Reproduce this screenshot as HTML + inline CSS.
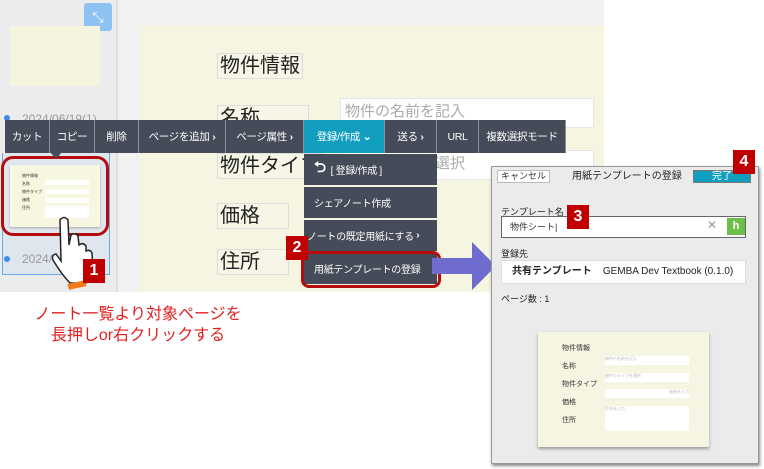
<!DOCTYPE html><html><head><meta charset="utf-8"><style>
*{margin:0;padding:0;box-sizing:border-box}
body{width:764px;height:469px;overflow:hidden;background:#fff;position:relative;font-family:"Liberation Sans","Noto Sans CJK JP",sans-serif}
.a{position:absolute;white-space:nowrap}
.tb{position:absolute;top:120px;height:33px;background:#454b58;color:#fff;font-size:10.5px;display:flex;align-items:center;justify-content:center;border-right:1px solid #8a8f98;white-space:nowrap;letter-spacing:-0.3px}
.dd{position:absolute;left:304px;width:133px;background:#454b58;color:#fff;font-size:10px;display:flex;align-items:center;padding-left:10px;white-space:nowrap;letter-spacing:-0.3px}
.lab{position:absolute;font-size:20px;color:#222;border:1px solid #ddd;padding:0 2px;line-height:24px;background:rgba(255,255,255,.15);white-space:nowrap}
.inp{position:absolute;background:#fff;border:1px solid #e5e5e5;color:#aaa;font-size:15px;padding-left:4px;line-height:26px;white-space:nowrap}
.badge{position:absolute;background:#c00000;color:#fff;font-weight:bold;font-size:16px;width:22px;height:24px;display:flex;align-items:center;justify-content:center}
</style></head><body>
<div class="a" style="left:0;top:0;width:116px;height:292px;background:#ececec"></div>
<div class="a" style="left:116px;top:0;width:2px;height:292px;background:#e0e0e0"></div>
<div class="a" style="left:84px;top:3px;width:28px;height:28px;background:#8ec2f3;border-radius:3px;color:#fff;font-size:14px;text-align:center;line-height:28px">⤡</div>
<div class="a" style="left:10px;top:26px;width:90px;height:60px;background:#f5f5df"></div>
<div class="a" style="left:4px;top:115px;width:6px;height:6px;border-radius:50%;background:#3a8ee6"></div>
<div class="a" style="left:22px;top:112px;font-size:12px;color:#999">2024/06/19(1)</div>
<div class="a" style="left:2px;top:153px;width:108px;height:122px;background:#dfe6ee;border:1px solid #6aa8f0;border-top:none"></div>
<div class="a" style="left:10px;top:165px;width:90px;height:62px;background:#f7f7e1;box-shadow:0 1px 2px #aaa"></div>
<div class="a" style="left:22px;top:172px;font-size:4px;color:#333;line-height:8px">物件情報<br>名称<br>物件タイプ<br>価格<br>住所</div>
<div class="a" style="left:45px;top:180px;width:44px;height:5px;background:#fff"></div>
<div class="a" style="left:45px;top:189px;width:44px;height:5px;background:#fff"></div>
<div class="a" style="left:45px;top:198px;width:44px;height:5px;background:#fff"></div>
<div class="a" style="left:45px;top:206px;width:44px;height:12px;background:#fff"></div>
<div class="a" style="left:1px;top:156px;width:108px;height:80px;border:3px solid #b50d0d;border-radius:12px"></div>
<div class="a" style="left:4px;top:256px;width:6px;height:6px;border-radius:50%;background:#3a8ee6"></div>
<div class="a" style="left:22px;top:252px;font-size:12px;color:#999">2024/0</div>
<svg class="a" style="left:48px;top:215px" width="50" height="75" viewBox="0 0 50 75"><path d="M12 5 Q16 0 20 5 L21 30 L23 20 Q27 17 30 21 L31 30 Q35 27 38 31 L38 36 Q42 34 44 38 L45 55 Q44 62 38 68 L22 68 Q14 60 5 45 Q3 40 8 39 L13 46 Z" fill="#fff" stroke="#222" stroke-width="1.5"/><rect x="20" y="67" width="18" height="6" fill="#f07b1c" transform="rotate(-12 29 70)"/></svg>
<div class="badge" style="left:83px;top:259px">1</div>
<div class="a" style="left:118px;top:0;width:486px;height:292px;background:#f2f2f2"></div>
<div class="a" style="left:139px;top:26px;width:465px;height:266px;background:#f6f5e2"></div>
<div class="lab" style="left:217px;top:53px">物件情報</div>
<div class="lab" style="left:217px;top:105px;width:92px">名称</div>
<div class="inp" style="left:340px;top:98px;width:254px;height:30px">物件の名前を記入</div>
<div class="lab" style="left:217px;top:153px">物件タイプ</div>
<div class="inp" style="left:340px;top:150px;width:254px;height:30px">　　　　　　選択</div>
<div class="lab" style="left:217px;top:203px;width:72px">価格</div>
<div class="lab" style="left:217px;top:249px;width:72px">住所</div>
<div class="tb" style="left:5px;width:45px">カット</div>
<div class="tb" style="left:50px;width:45px">コピー</div>
<div class="tb" style="left:95px;width:44px">削除</div>
<div class="tb" style="left:139px;width:87px">ページを追加&nbsp;<b>›</b></div>
<div class="tb" style="left:226px;width:78px">ページ属性&nbsp;<b>›</b></div>
<div class="tb" style="left:304px;width:81px;background:#129fbf">登録/作成&nbsp;<b>⌄</b></div>
<div class="tb" style="left:385px;width:52px">送る&nbsp;<b>›</b></div>
<div class="tb" style="left:437px;width:42px">URL</div>
<div class="tb" style="left:479px;width:87px">複数選択モード</div>
<div class="a" style="left:50px;top:152px;width:0;height:0;border-left:6px solid transparent;border-right:6px solid transparent;border-top:7px solid #454b58"></div>
<div class="dd" style="top:154px;height:31px"><b style="font-size:15px">⮌</b>&nbsp;&nbsp;[ 登録/作成 ]</div>
<div class="dd" style="top:187px;height:31px">シェアノート作成</div>
<div class="dd" style="top:220px;height:31px;padding-left:3px">ノートの既定用紙にする&nbsp;<b>›</b></div>
<div class="dd" style="top:253px;height:31px">用紙テンプレートの登録</div>
<div class="a" style="left:301px;top:251px;width:140px;height:37px;border:3px solid #b50d0d;border-radius:8px"></div>
<div class="badge" style="left:286px;top:236px">2</div>
<svg class="a" style="left:432px;top:240px" width="66" height="52"><path d="M0 18 H40 V2 L64 26 L40 50 V34 H0 Z" fill="#6f6ccf"/></svg>
<div class="a" style="left:18px;top:304px;width:240px;text-align:center;color:#e02020;font-size:16px;line-height:21px">ノート一覧より対象ページを<br>長押しor右クリックする</div>
<div class="a" style="left:491px;top:166px;width:268px;height:298px;background:#ebebeb;border:1px solid #999;box-shadow:1px 2px 3px #888"></div>
<div class="a" style="left:497px;top:170px;width:53px;height:13px;background:#fff;border:1px solid #bbb;font-size:9px;text-align:center;line-height:11px;color:#333">キャンセル</div>
<div class="a" style="left:572px;top:170px;font-size:10px;color:#222;line-height:13px">用紙テンプレートの登録</div>
<div class="a" style="left:693px;top:170px;width:58px;height:13px;background:#129fbf;border:1px solid #777;font-size:10px;text-align:center;line-height:11px;color:#fff">完了</div>
<div class="badge" style="left:733px;top:150px">4</div>
<div class="a" style="left:501px;top:205px;font-size:9px;color:#222">テンプレート名</div>
<div class="a" style="left:501px;top:216px;width:245px;height:22px;background:#fff;border:1px solid #666;font-size:9px;line-height:20px;padding-left:8px;color:#333">物件シート|</div>
<div class="a" style="left:707px;top:218px;font-size:12px;color:#999">✕</div>
<div class="a" style="left:727px;top:218px;width:18px;height:17px;background:#6cc04a;color:#fff;font-size:11px;font-weight:bold;text-align:center;line-height:17px">h</div>
<div class="badge" style="left:567px;top:205px">3</div>
<div class="a" style="left:501px;top:247px;font-size:9px;color:#222">登録先</div>
<div class="a" style="left:501px;top:260px;width:245px;height:24px;background:#fff;border:1px solid #ddd;font-size:10px;line-height:22px;padding-left:10px;color:#222"><b>共有テンプレート</b>&nbsp;&nbsp;&nbsp;&nbsp;GEMBA Dev Textbook (0.1.0)</div>
<div class="a" style="left:501px;top:292px;font-size:9px;color:#222">ページ数 : 1</div>
<div class="a" style="left:538px;top:332px;width:171px;height:115px;background:#f6f5e2;box-shadow:0 2px 3px #999"></div>
<div class="a" style="left:562px;top:340px;font-size:7px;color:#333;line-height:18px">物件情報<br>名称<br>物件タイプ<br>価格<br>住所</div>
<div class="a" style="left:605px;top:356px;width:84px;height:9px;background:#fff;font-size:4px;color:#bbb">物件の名前を記入</div>
<div class="a" style="left:605px;top:373px;width:84px;height:9px;background:#fff;font-size:4px;color:#bbb">物件のタイプを選択</div>
<div class="a" style="left:605px;top:389px;width:84px;height:9px;background:#fff;font-size:4px;color:#bbb;text-align:right">価格を入力</div>
<div class="a" style="left:605px;top:406px;width:84px;height:25px;background:#fff;font-size:4px;color:#bbb">住所を入力</div>
</body></html>
